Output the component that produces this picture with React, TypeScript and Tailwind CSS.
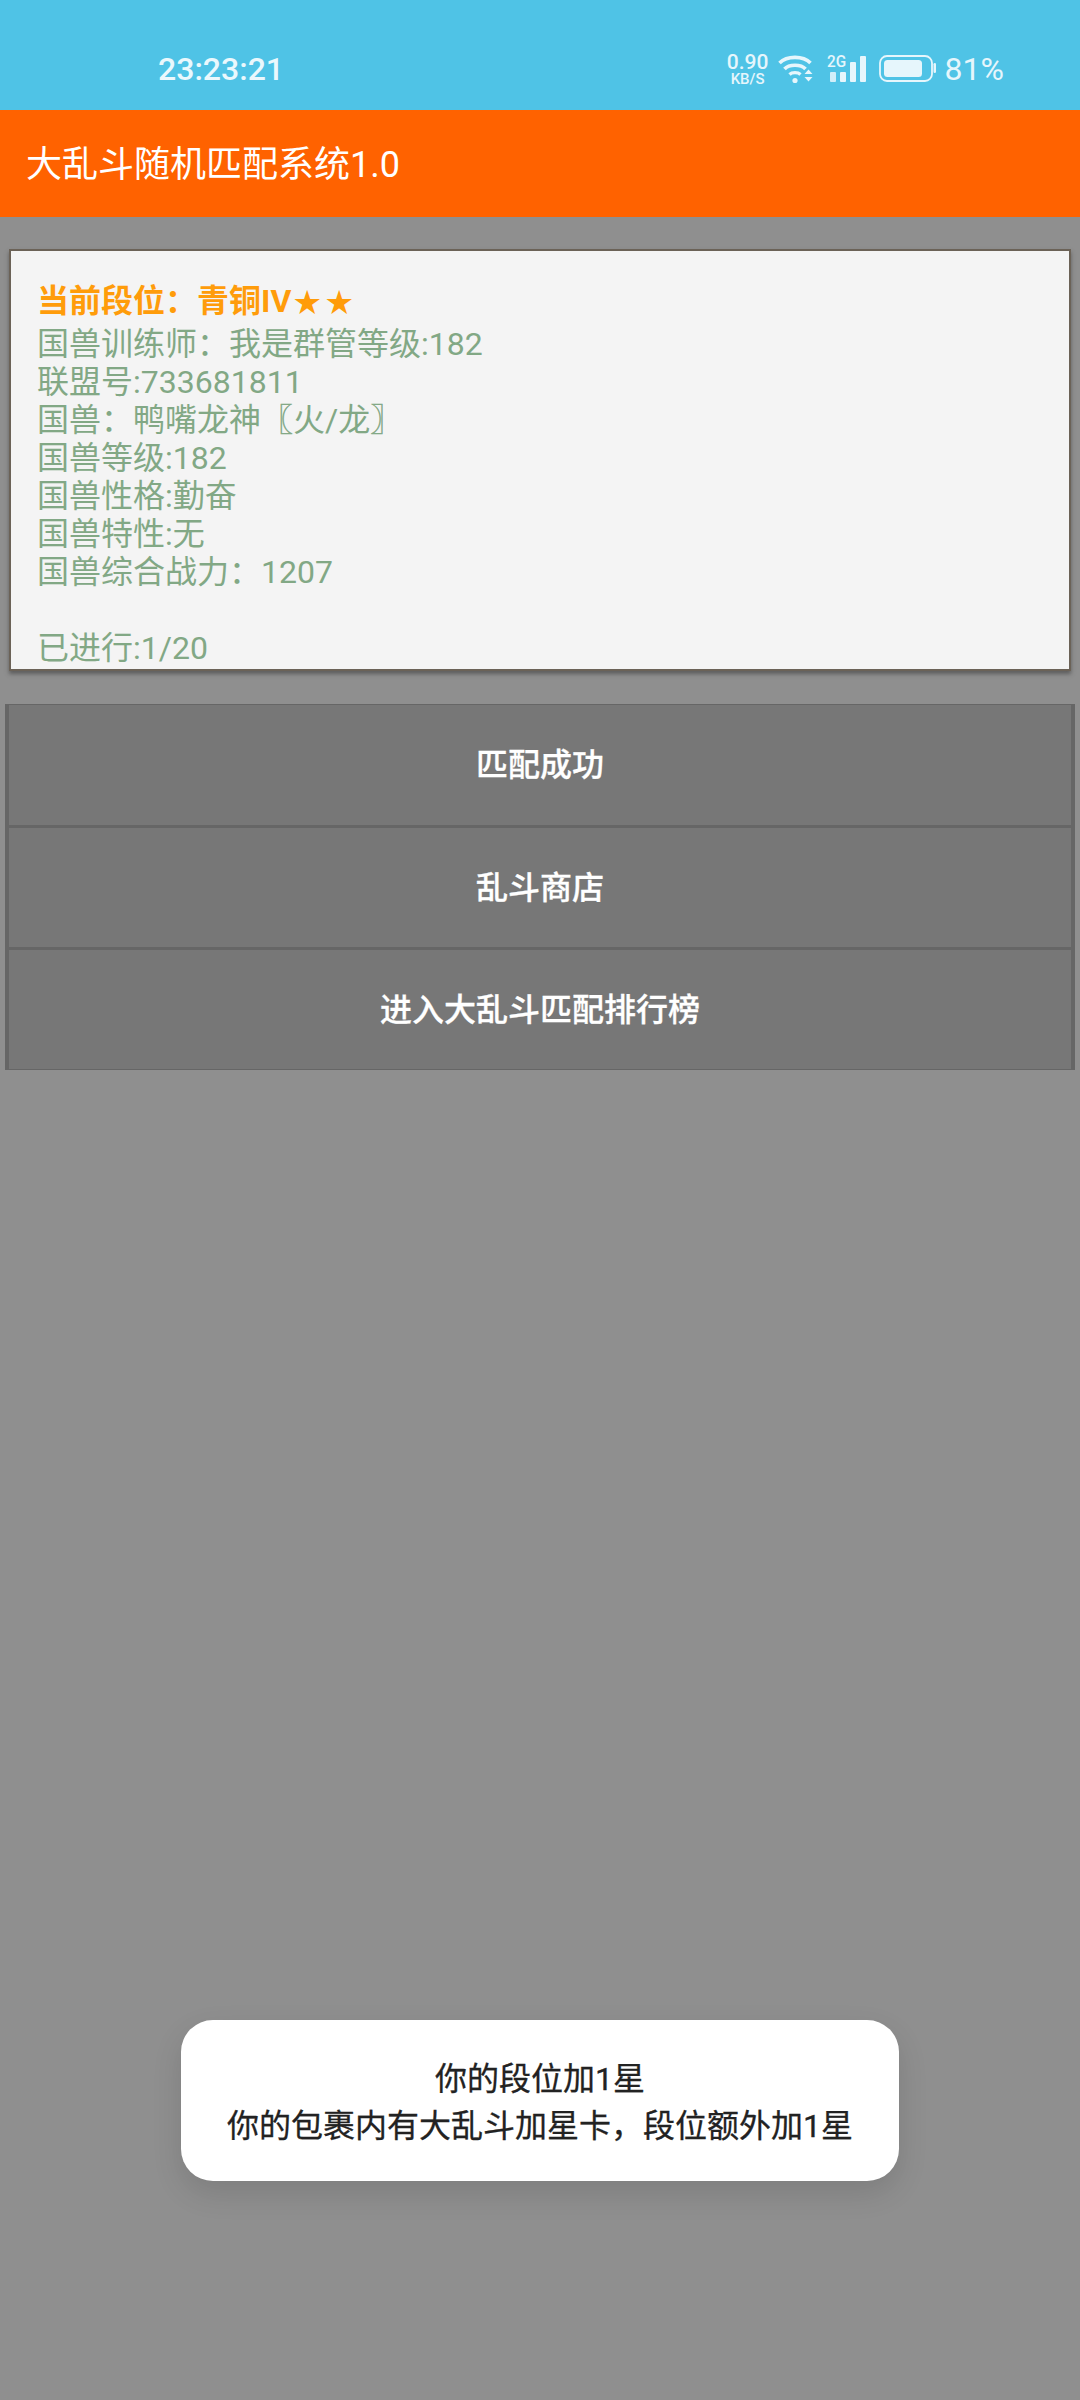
import React from 'react';

// palt pulls the full-width colon to the left of its cell, as in the reference
const Colon: React.FC = () => (
    <span className="inline-block w-[32px] [font-feature-settings:'palt']">：</span>
);

const Star: React.FC = () => (
    <span className="inline-block w-[32px] text-center text-[27px] font-normal">★</span>
);

const Bracket: React.FC<{children: React.ReactNode}> = ({children}) => (
    <span className="[-webkit-text-stroke:0.5px_#82a885]">{children}</span>
);

const infoLines: React.ReactNode[] = [
    <>国兽训练师<Colon />我是群管等级:182</>,
    "联盟号:733681811",
    <>国兽<Colon />鸭嘴龙神<Bracket>〖</Bracket>火/龙<Bracket>〗</Bracket></>,
    "国兽等级:182",
    "国兽性格:勤奋",
    "国兽特性:无",
    <>国兽综合战力<Colon />1207</>,
    "\u00a0",
    "已进行:1/20",
];

const buttons = ["匹配成功", "乱斗商店", "进入大乱斗匹配排行榜"];

const WifiIcon: React.FC = () => (
    <svg width="36" height="30" viewBox="0 0 36 30" fill="none" className="block">
        <path d="M1.5 9 C9 1.5 25 1.5 32.5 9" stroke="#e6f6fc" strokeWidth="3.6" />
        <path d="M6.5 15 C11 10 23 10 27.5 15" stroke="#e6f6fc" strokeWidth="3.6" />
        <path d="M11.5 20.5 C14 18 20 18 22.5 20.5" stroke="#e6f6fc" strokeWidth="3.2" />
        <circle cx="17" cy="26.5" r="2.6" fill="#e6f6fc" />
        <path d="M26.5 20 L30.5 15.5 L34.5 20 Z M26.5 23 L34.5 23 L30.5 27.5 Z" fill="#e6f6fc" />
    </svg>
);

const SignalIcon: React.FC = () => (
    <div className="flex flex-col w-[40px] h-[30px]">
        <span className="text-[17px] leading-[14px] font-medium text-[#e6f6fc] scale-x-90 origin-left">2G</span>
        <svg width="40" height="30" viewBox="0 0 40 30" fill="none" className="block -mt-[14px]">
            <rect x="3" y="18" width="6" height="10" rx="1" fill="#e6f6fc" fillOpacity="0.85" />
            <rect x="13" y="18" width="6" height="10" rx="1" fill="#e6f6fc" />
            <rect x="23" y="8" width="6" height="20" rx="1" fill="#e6f6fc" />
            <rect x="33" y="2" width="6" height="26" rx="1" fill="#e6f6fc" />
        </svg>
    </div>
);

const BatteryIcon: React.FC = () => (
    <svg width="58" height="28" viewBox="0 0 58 28" fill="none" className="block">
        <rect x="1" y="1" width="52" height="25" rx="7" stroke="#e6f6fc" strokeWidth="1.8" />
        <rect x="5" y="5" width="38" height="17" rx="3.5" fill="#e6f6fc" />
        <rect x="54.5" y="8" width="2.5" height="10" rx="1.25" fill="#e6f6fc" />
    </svg>
);

const App: React.FC = () => {
    return (
        <div className="relative w-[1080px] h-[2400px] overflow-hidden bg-[#8f8f8f] font-['Roboto','Noto_Sans_CJK_SC',sans-serif]">
            <div className="h-[110px] bg-[#4fc3e6] flex items-center pt-[28px] pl-[158px] pr-[76px] text-[#e6f6fc]">
                <span className="text-[32px] leading-[38px] font-medium text-[#eaf8fd]">23:23:21</span>
                <div className="ml-auto flex items-center">
                    <div className="flex flex-col items-center w-[42px] font-medium">
                        <span className="text-[21px] leading-[20px]">0.90</span>
                        <span className="text-[15px] leading-[14px]">KB/S</span>
                    </div>
                    <div className="ml-[9px]"><WifiIcon /></div>
                    <div className="ml-[13px]"><SignalIcon /></div>
                    <div className="ml-[12px]"><BatteryIcon /></div>
                    <span className="ml-[8px] text-[32px] leading-[38px]">81%</span>
                </div>
            </div>
            <div className="h-[107px] bg-[#ff6200] flex items-center pl-[26px] pt-[2px] text-[36px] text-white">
                大乱斗随机匹配系统1.0
            </div>

            <div className="mx-[9px] mt-[32px] h-[422px] bg-[#f4f4f4] border-2 border-[#6b6257] shadow-[0_3px_4px_rgba(60,60,60,0.6)] pl-[26px] pt-[31px] overflow-hidden">
                <div className="text-[32px] leading-[38px] font-bold text-[#ff9c0a] mb-[3px]">
                    当前段位<Colon />青铜IV<Star /><Star />
                </div>
                {infoLines.map((line, i) => (
                    <div key={i} className="text-[32px] leading-[38px] text-[#82a885] whitespace-pre">{line}</div>
                ))}
            </div>

            <div className="mx-[5px] mt-[33px] border-x-[4px] border-y border-[#666666]">
                {buttons.map((label, i) => (
                    <div
                        key={label}
                        className={
                            i > 0
                                ? "h-[122px] border-t-[3px] border-[#666666] bg-[#777777] flex items-center justify-center text-[32px] font-medium text-white [-webkit-text-stroke:0.3px_white]"
                                : "h-[120px] bg-[#777777] flex items-center justify-center text-[32px] font-medium text-white [-webkit-text-stroke:0.3px_white]"
                        }
                    >
                        {label}
                    </div>
                ))}
            </div>

            <div className="absolute left-[181px] top-[2020px] w-[718px] h-[161px] rounded-[32px] bg-white shadow-[0_12px_30px_rgba(0,0,0,0.12)] flex flex-col items-center justify-center pt-[4px] text-[32px] leading-[47px] text-[#222222] [-webkit-text-stroke:0.3px_#222222]">
                <span>你的段位加1星</span>
                <span>你的包裹内有大乱斗加星卡，段位额外加1星</span>
            </div>
        </div>
    );
};

export default App;
